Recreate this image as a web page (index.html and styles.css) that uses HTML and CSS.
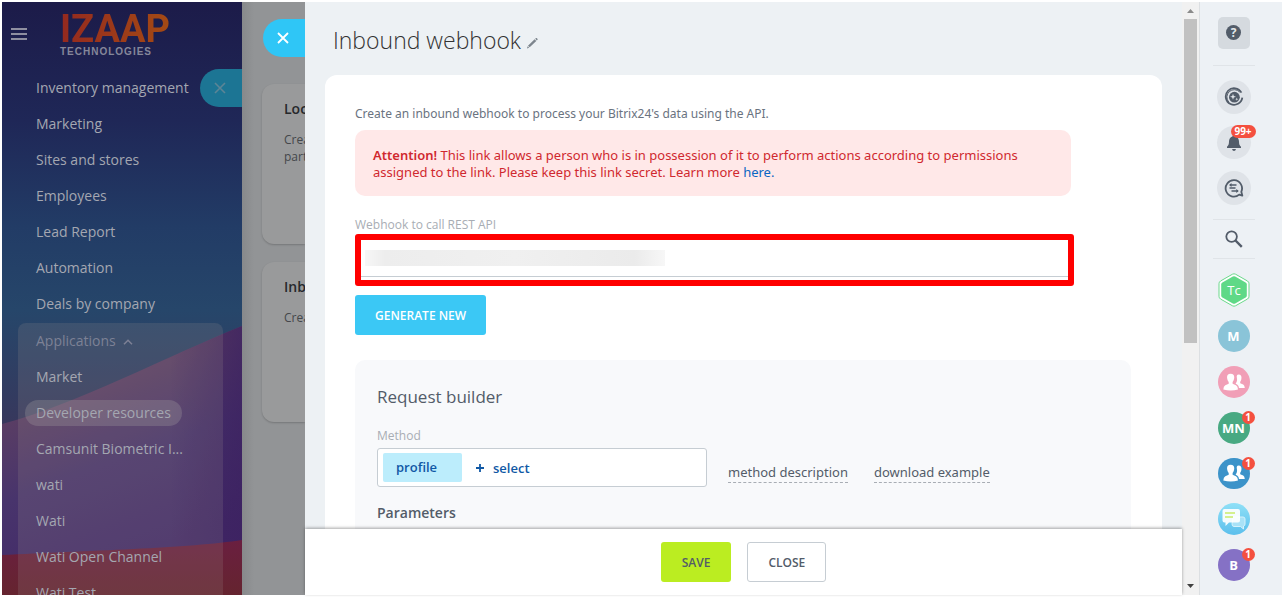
FILE: index.html
```html
<!DOCTYPE html>
<html lang="en">
  <head>
    <meta charset="UTF-8" />
    <meta name="viewport" content="width=device-width, initial-scale=1.0" />
    <title>Inbound webhook</title>
    <link rel="stylesheet" href="styles.css">
  </head>
  <body>
    <div class="app">
      <!-- left menu -->
      <aside class="sidebar">
        <svg class="sidebar-bg" viewBox="0 0 240 593" preserveAspectRatio="none" aria-hidden="true">
          <defs>
            <linearGradient id="sky" x1="0" y1="0" x2="0" y2="1">
              <stop offset="0" stop-color="#1c1b49" />
              <stop offset="0.2" stop-color="#1f2757" />
              <stop offset="0.38" stop-color="#223c66" />
              <stop offset="0.52" stop-color="#26466a" />
              <stop offset="0.72" stop-color="#38375c" />
            </linearGradient>
            <linearGradient id="hill" x1="0.3" y1="0.1" x2="0.55" y2="0.85">
              <stop offset="0" stop-color="#5e3c62" />
              <stop offset="0.2" stop-color="#593d64" />
              <stop offset="0.55" stop-color="#48346c" />
              <stop offset="1" stop-color="#432a68" />
            </linearGradient>
            <linearGradient id="edge" x1="0" y1="0" x2="1" y2="0">
              <stop offset="0.7" stop-color="#35195a" stop-opacity="0" />
              <stop offset="1" stop-color="#3b2060" stop-opacity="0.7" />
            </linearGradient>
            <linearGradient id="ground" x1="0" y1="0" x2="0" y2="1">
              <stop offset="0" stop-color="#6a1f40" />
              <stop offset="1" stop-color="#65242f" />
            </linearGradient>
          </defs>
          <rect width="240" height="593" fill="url(#sky)" />
          <path d="M0 422 C70 404 170 352 240 324 V593 H0z" fill="url(#hill)" />
          <path d="M0 422 C70 404 170 352 240 324 V593 H0z" fill="url(#edge)" />
          <path d="M0 553 C80 549 190 546 240 538 V593 H0z" fill="url(#ground)" />
        </svg>
        <header class="brand">
          <button class="burger" aria-label="Menu"><span></span><span></span><span></span></button>
          <a class="logo" href="#">
            <span class="logo-name">IZAAP</span>
            <span class="logo-sub">TECHNOLOGIES</span>
          </a>
        </header>
        <nav class="menu">
          <a href="#">Inventory management</a>
          <a href="#">Marketing</a>
          <a href="#">Sites and stores</a>
          <a href="#">Employees</a>
          <a href="#">Lead Report</a>
          <a href="#">Automation</a>
          <a href="#">Deals by company</a>
          <div class="menu-group">
            <a class="group-title" href="#">Applications
              <svg width="10" height="6" viewBox="0 0 10 6" fill="none" stroke="currentColor" stroke-width="1.5" aria-hidden="true"><path d="M1 5.3 5 1.2 9 5.3" /></svg>
            </a>
            <a href="#">Market</a>
            <a class="active" href="#"><span>Developer resources</span></a>
            <a href="#">Camsunit Biometric I...</a>
            <a href="#">wati</a>
            <a href="#">Wati</a>
            <a href="#">Wati Open Channel</a>
            <a href="#">Wati Test</a>
          </div>
        </nav>
        <button class="tab tab-dim" aria-label="Close section">
          <svg width="12" height="12" viewBox="0 0 12 12" stroke="currentColor" stroke-width="1.6" aria-hidden="true"><path d="M1 1 11 11M11 1 1 11" /></svg>
        </button>
      </aside>

      <!-- page under the slider -->
      <section class="under">
        <div class="tile">
          <h2>Local</h2>
          <p>Create<br>partner</p>
        </div>
        <div class="tile">
          <h2>Inbound</h2>
          <p>Create</p>
        </div>
        <button class="tab" aria-label="Close">
          <svg width="12" height="12" viewBox="0 0 12 12" stroke="currentColor" stroke-width="1.8" aria-hidden="true"><path d="M1 1 11 11M11 1 1 11" /></svg>
        </button>
      </section>

      <!-- slider -->
      <main class="slider">
        <div class="content">
          <h1>Inbound webhook
            <svg width="11" height="11" viewBox="0 0 11 11" fill="#7d858d" aria-hidden="true"><path d="M8.2 .8 9 .1q.5-.3 1 .2l.5.6q.4.5 0 .9l-.7.8zM7.6 1.3 9.3 3 2.7 9.2 1 7.7zM.6 8.2 2.2 9.8 0 10.6z" /></svg>
          </h1>
          <div class="card">
            <p class="intro">Create an inbound webhook to process your Bitrix24's data using the API.</p>
            <div class="alert"><b>Attention!</b> This link allows a person who is in possession of it to perform actions according to permissions assigned to the link. Please keep this link secret. Learn more <a href="#">here.</a></div>
            <label class="label" for="hook">Webhook to call REST API</label>
            <div class="hook-frame"><input id="hook" class="hook" type="text" readonly></div>
            <button class="btn btn-blue">GENERATE NEW</button>
            <div class="builder">
              <h2>Request builder</h2>
              <span class="label" id="method-label">Method</span>
              <div class="method-row">
                <div class="picker" role="group" aria-labelledby="method-label">
                  <span class="tag">profile</span>
                  <button class="pick">
                    <svg width="8" height="8" viewBox="0 0 8 8" stroke="currentColor" stroke-width="1.8" aria-hidden="true"><path d="M4 0V8M0 4H8" /></svg>
                    select
                  </button>
                </div>
                <a class="dashed" href="#">method description</a>
                <a class="dashed" href="#">download example</a>
              </div>
              <h3>Parameters</h3>
            </div>
          </div>
        </div>
        <footer class="actions">
          <button class="btn btn-green">SAVE</button>
          <button class="btn btn-line">CLOSE</button>
        </footer>
      </main>

      <div class="scrollbar" aria-hidden="true">
        <svg width="7" height="4" viewBox="0 0 7 4" fill="#8a8a8a"><path d="M0 4 3.5 0 7 4z" /></svg>
        <div class="thumb"></div>
        <svg width="7" height="4" viewBox="0 0 7 4" fill="#404040"><path d="M0 0 3.5 4 7 0z" /></svg>
      </div>

      <!-- right rail -->
      <aside class="rail">
        <button class="help" aria-label="Help"><span>?</span></button>
        <hr>
        <button class="round" aria-label="Copilot">
          <svg width="20" height="20" viewBox="0 0 20 20" fill="none" stroke="#525c69" aria-hidden="true">
            <path d="M17.4 5.6A8.3 8.3 0 1 0 18.3 10.6" stroke-width="1.8" />
            <path d="M15.8 5.1A7.4 7.4 0 0 0 4.8 15.1" stroke-width="1" />
            <circle cx="10.4" cy="10.2" r="5.4" fill="#525c69" stroke="none" />
            <path d="M9 6.8 9.8 9 12 9.8 9.8 10.6 9 12.8 8.2 10.6 6 9.8 8.2 9zM12.8 10.6 13.2 11.8 14.4 12.2 13.2 12.6 12.8 13.8 12.4 12.6 11.2 12.2 12.4 11.8z" fill="#e1e5e9" stroke="none" />
          </svg>
        </button>
        <button class="round" aria-label="Notifications">
          <svg width="16" height="18" viewBox="0 0 16 18" fill="#525c69" aria-hidden="true"><path d="M8 1a1.6 1.6 0 0 1 1.6 1.5C12 3.2 13 5.3 13 7.6 13 10.4 13.6 11.6 15 12.8V14H1V12.8C2.4 11.6 3 10.4 3 7.6 3 5.3 4 3.2 6.4 2.5A1.6 1.6 0 0 1 8 1zM6 15H10Q9.500 17 8 17T6 15z" /></svg>
          <span class="badge badge-wide">99+</span>
        </button>
        <button class="round" aria-label="Messages">
          <svg width="20" height="20" viewBox="0 0 20 20" fill="none" stroke="#525c69" aria-hidden="true">
            <path d="M15.200 16.600A8.200 8.200 0 1 1 17.300 13.800L18.300 17.600z" stroke-width="1.8" stroke-linejoin="round" />
            <path d="M6 7H12.500M5.500 10H11.500M7.500 13H14" stroke-width="1.500" />
            <path d="M7.500 5 5 7 7.500 9zM12.300 11 14.800 13 12.300 15z" fill="#525c69" stroke="none" />
          </svg>
        </button>
        <hr>
        <button class="search" aria-label="Search">
          <svg width="18" height="18" viewBox="0 0 18 18" fill="none" stroke="#535c69" aria-hidden="true"><circle cx="6.600" cy="6.600" r="5.300" stroke-width="1.800" /><path d="M10.500 10.500 16.800 16.800" stroke-width="2.400" /></svg>
        </button>
        <hr>
        <a class="avatar hex" href="#">
          <svg width="32" height="34" viewBox="0 0 32 34" aria-hidden="true">
            <path d="M14.500 1.200Q16 .4 17.500 1.200L29.500 8Q31 9 31 10.700V23.300Q31 25 29.500 26L17.500 32.800Q16 33.600 14.500 32.800L2.500 26Q1 25 1 23.300V10.700Q1 9 2.500 8z" fill="#fff" stroke="#6ad98a" />
            <path d="M14.800 3.600Q16 3 17.200 3.600L27.600 9.500Q28.800 10.200 28.800 11.500V22.500Q28.800 23.800 27.600 24.500L17.200 30.400Q16 31 14.800 30.400L4.400 24.500Q3.200 23.800 3.200 22.500V11.500Q3.200 10.200 4.400 9.500z" fill="#5fd987" />
            <text x="16" y="22" text-anchor="middle" class="hex-text">Tc</text>
          </svg>
        </a>
        <a class="avatar sky" href="#">M</a>
        <a class="avatar pink" href="#" aria-label="Group chat">
          <svg width="22" height="18" viewBox="0 0 22 18" fill="#fff" aria-hidden="true">
            <path d="M15.500 1.500C18 1.500 18.800 3.400 18.400 5.800 18.200 7.300 17.700 8 17.200 8.800V10.200L20.200 11.600Q21.500 12.300 21.800 15H16C15.700 12.800 15 11.800 12.600 10.700 14 9 14.300 7 13.900 5 13.400 2.800 14 1.600 15.500 1.500z" />
            <path d="M7.600 .8C10.800.8 11.600 3 11.100 5.600 10.900 7.200 10.300 8.200 9.600 9V10.800L13 12.300Q14.800 13.200 15 16.600 8 18.400.3 16.600.5 13.200 2.300 12.300L5.700 10.800V9C5 8.200 4.400 7.200 4.200 5.600 3.700 3 4.500.8 7.600.8z" />
          </svg>
        </a>
        <a class="avatar green" href="#">MN<span class="badge">1</span></a>
        <a class="avatar blue" href="#" aria-label="Group chat">
          <svg width="22" height="18" viewBox="0 0 22 18" fill="#fff" aria-hidden="true">
            <path d="M15.500 1.500C18 1.500 18.800 3.400 18.400 5.800 18.200 7.300 17.700 8 17.200 8.800V10.200L20.200 11.600Q21.500 12.300 21.800 15H16C15.700 12.800 15 11.800 12.600 10.700 14 9 14.300 7 13.900 5 13.400 2.800 14 1.600 15.500 1.500z" />
            <path d="M7.600 .8C10.800.8 11.600 3 11.100 5.600 10.900 7.200 10.300 8.200 9.600 9V10.800L13 12.300Q14.800 13.200 15 16.600 8 18.400.3 16.600.5 13.200 2.300 12.300L5.700 10.800V9C5 8.200 4.400 7.200 4.200 5.600 3.700 3 4.500.8 7.600.8z" />
          </svg>
          <span class="badge">1</span>
        </a>
        <a class="avatar talk" href="#" aria-label="General chat">
          <svg width="26" height="22" viewBox="0 0 26 22" aria-hidden="true">
            <path d="M12 9H22Q24 9 24 11V16Q24 18 22.500 18V21L19.500 18.500H13Q11 18.500 11 16z" fill="#a9e2f7" stroke="#d5f2fc" />
            <path d="M3.500 1H17Q19 1 19 3V12.500Q19 14.500 17 14.500H8L4.500 18V14.500H3.500Q1.500 14.500 1.500 12.500V3Q1.500 1 3.500 1z" fill="#fff" fill-opacity=".92" />
            <path d="M4 5H14M4 9H12" stroke="#c9ec6a" stroke-width="1.600" />
          </svg>
        </a>
        <a class="avatar violet" href="#">B<span class="badge">1</span></a>
      </aside>
    </div>
  </body>
</html>
```
FILE: styles.css
```css
* {
  box-sizing: border-box;
}

body {
  margin: 0;
  padding: 2px;
  height: 100vh;
  background: #fff;
  font-family: "Open Sans", "Noto Sans", sans-serif;
  font-size: 13px;
  color: #535c69;
  overflow: hidden;
}

button,
input {
  font-family: inherit;
  margin: 0;
  padding: 0;
  border: 0;
  background: none;
}

a {
  color: inherit;
  text-decoration: none;
}

h1,
h2,
h3,
p {
  margin: 0;
}

.app {
  display: flex;
  height: 100%;
}

/* left menu */
.sidebar {
  position: relative;
  flex: 0 0 240px;
  overflow: hidden;
  color: #a4a7b1;
}

.sidebar-bg {
  position: absolute;
  inset: 0;
  width: 100%;
  height: 100%;
}

.brand {
  position: relative;
  display: flex;
  align-items: center;
  gap: 33px;
  height: 64px;
  margin-bottom: 4px;
  padding-left: 9px;
}

.burger {
  display: flex;
  flex-direction: column;
  gap: 3px;
  width: 16px;
}

.burger span {
  height: 2px;
  background: #8f8fa0;
}

.logo {
  display: flex;
  flex-direction: column;
}

.logo-name {
  font-family: Roboto, sans-serif;
  font-size: 38px;
  font-weight: 700;
  line-height: 36px;
  background: linear-gradient(90deg, #94291f, #a44a14);
  -webkit-background-clip: text;
  background-clip: text;
  color: transparent;
}

.logo-sub {
  font-family: "Liberation Sans", sans-serif;
  font-size: 10px;
  font-weight: 700;
  line-height: 10px;
  letter-spacing: 1px;
  color: #85879a;
}

.menu {
  position: relative;
  display: flex;
  flex-direction: column;
  font-size: 14px;
}

.menu a {
  height: 36px;
  padding-left: 34px;
  line-height: 36px;
  white-space: nowrap;
}

.menu-group {
  display: flex;
  flex-direction: column;
  margin: 1px 19px 0 16px;
  border-radius: 8px;
  background: rgba(160, 150, 145, 0.18);
}

.menu .menu-group a {
  padding-left: 18px;
}

.menu .group-title {
  color: #7d8195;
}

.group-title svg {
  margin-left: 4px;
  vertical-align: middle;
}

.menu .menu-group .active {
  display: flex;
  align-items: center;
  padding-left: 7px;
}

.active span {
  padding: 0 11px;
  border-radius: 13px;
  line-height: 26px;
  background: rgba(170, 165, 165, 0.28);
}

/* closing tabs lie over the page edge */
.tab {
  position: absolute;
  top: 17px;
  right: 0;
  display: flex;
  align-items: center;
  width: 42px;
  height: 38px;
  padding-left: 14px;
  border-radius: 19px 0 0 19px;
  background: #2fc6f6;
  color: #fff;
}

.tab-dim {
  top: 67px;
  background: #1c7594;
  color: #5c8596;
}

/* page under the slider */
.under {
  position: relative;
  flex: 0 0 63px;
  display: flex;
  flex-direction: column;
  gap: 18px;
  padding: 82px 0 0 20px;
  overflow: hidden;
  background: linear-gradient(90deg, #87898b, #929496 12px);
}

.tile {
  height: 160px;
  padding: 14px 0 0 22px;
  border-radius: 12px 0 0 12px;
  background: #999a9b;
  box-shadow: 0 1px 2px rgba(0, 0, 0, 0.2);
  overflow: hidden;
}

.tile h2 {
  font-size: 14px;
  font-weight: 600;
  line-height: 22px;
  color: #26282b;
}

.tile p {
  margin-top: 11px;
  font-size: 12px;
  line-height: 17px;
  color: #44474b;
}

/* slider */
.slider {
  flex: 1;
  min-width: 0;
  display: flex;
  flex-direction: column;
  background: #edf1f4;
}

.content {
  flex: 1;
  min-height: 0;
  overflow: hidden;
  padding: 0 20px;
}

h1 {
  height: 73px;
  padding: 21px 0 0 8px;
  font-size: 23px;
  font-weight: 300;
  line-height: 34px;
  color: #333;
}

.card {
  padding: 30px 31px 30px 30px;
  border-radius: 12px;
  background: #fff;
}

.intro,
.alert,
.dashed {
  font-family: "Noto Sans", "Open Sans", sans-serif;
}

.intro {
  font-size: 12px;
  line-height: 17px;
  color: #6a737f;
}

.alert {
  max-width: 716px;
  margin-top: 8px;
  padding: 17px 18px 15px;
  border-radius: 10px;
  background: #ffe8e8;
  line-height: 17px;
  color: #d0282f;
}

.alert b {
  font-weight: 600;
}

.alert a {
  color: #0b66c3;
}

.label {
  display: block;
  font-size: 12px;
  line-height: 16px;
  color: #a8adb4;
}

.alert + .label {
  margin-top: 21px;
}

.hook-frame {
  max-width: 719px;
  margin-top: 1px;
  padding: 0 0 3px;
  border: 6px solid #f00;
  border-radius: 3px;
}

.hook {
  display: block;
  width: 100%;
  height: 37px;
  border-bottom: 1px solid #c6cdd3;
  outline: 0;
  background: linear-gradient(90deg, #f7f7f7, #ededed 20px, #f0f0f0 50%, #ebebeb 270px, #f7f7f7) 4px 10px / 300px 16px no-repeat;
}

.btn {
  height: 40px;
  padding: 0 20px;
  border: 1px solid transparent;
  border-radius: 3px;
  font-size: 12px;
  font-weight: 600;
}

.btn-blue {
  display: block;
  margin-top: 9px;
  padding: 0 19px;
  background: #3bc8f5;
  color: #fff;
}

.btn-green {
  background: #bbed21;
  color: #535c69;
}

.btn-line {
  border-color: #c6cdd3;
  background: #fff;
  color: #535c69;
}

.builder {
  margin-top: 25px;
  padding: 24px 22px 30px;
  border-radius: 10px;
  background: #f8f9fb;
}

.builder h2 {
  font-size: 17px;
  font-weight: 400;
  line-height: 26px;
}

.builder .label {
  margin: 18px 0 4px;
}

.method-row {
  display: flex;
  align-items: center;
}

.picker {
  display: flex;
  align-items: center;
  gap: 14px;
  width: 330px;
  height: 39px;
  padding: 0 5px;
  border: 1px solid #c6cdd3;
  border-radius: 3px;
  background: #fff;
}

.tag {
  width: 79px;
  padding-left: 13px;
  border-radius: 2px;
  background: #bcedfc;
  line-height: 29px;
  color: #1058a5;
}

.tag,
.pick {
  font-size: 13px;
  font-weight: 600;
}

.pick {
  display: flex;
  align-items: center;
  gap: 9px;
  color: #1058a5;
}

.dashed {
  margin: 10px 5px 0 21px;
  border-bottom: 1px dashed #a8adb4;
  line-height: 20px;
}

.builder h3 {
  margin-top: 16px;
  font-size: 14px;
  font-weight: 600;
  line-height: 20px;
}

.actions {
  position: relative;
  display: flex;
  justify-content: center;
  gap: 16px;
  padding: 13px 0;
  margin-top: -1px;
  background: #fff;
  box-shadow: 0 -1px 3px rgba(0, 0, 0, 0.35);
}

/* scrollbar */
.scrollbar {
  flex: 0 0 18px;
  display: flex;
  flex-direction: column;
  align-items: center;
  padding: 7px 2px 7px 1px;
  border-right: 1px solid #dcdfe2;
  background: #f1f1f1;
}

.thumb {
  width: 13px;
  height: 324px;
  margin: 6px 0 auto;
  background: #c1c1c1;
}

/* right rail */
.rail {
  flex: 0 0 82px;
  display: flex;
  flex-direction: column;
  align-items: center;
  padding: 15px 15px 0 0;
  background: #edf1f5;
}

.rail hr {
  width: 42px;
  margin: 0;
  border: 0;
  border-top: 1px solid #e0e4e8;
}

.help {
  display: flex;
  align-items: center;
  justify-content: center;
  width: 32px;
  height: 32px;
  margin-bottom: 16px;
  border-radius: 5px;
  background: #d5dadf;
}

.help span {
  width: 15px;
  height: 15px;
  border-radius: 50%;
  background: #525c69;
  font-size: 12px;
  font-weight: 700;
  line-height: 15px;
  color: #e3e7eb;
}

.round {
  position: relative;
  display: flex;
  align-items: center;
  justify-content: center;
  width: 34px;
  height: 34px;
  margin-bottom: 12px;
  border-radius: 50%;
  background: #dfe3e8;
}

.help + hr + .round {
  margin-top: 14px;
}

.round + hr {
  margin-top: 2px;
}

.search {
  display: flex;
  align-items: center;
  height: 38px;
}

.avatar {
  position: relative;
  display: flex;
  align-items: center;
  justify-content: center;
  width: 32px;
  height: 32px;
  margin-bottom: 14px;
  border-radius: 50%;
  font-size: 13px;
  font-weight: 700;
  color: #fff;
}

.search + hr + .avatar {
  margin-top: 15px;
}

.hex svg {
  flex: none;
}

.hex-text {
  font-size: 13px;
  font-weight: 400;
  fill: #fff;
}

.sky {
  background: #8ac4d8;
}

.pink {
  background: #f19fb7;
}

.green {
  background: #48a982;
}

.blue {
  background: #3c93c9;
}

.talk {
  background: linear-gradient(180deg, #8fe0f7, #5cbfec);
}

.violet {
  background: #8571c5;
}

.badge {
  position: absolute;
  top: -1px;
  right: -5px;
  width: 13px;
  height: 13px;
  border-radius: 7px;
  background: #f4503f;
  font-size: 10px;
  font-weight: 700;
  line-height: 13px;
  text-align: center;
  color: #fff;
}

.badge-wide {
  width: 25px;
}
```
